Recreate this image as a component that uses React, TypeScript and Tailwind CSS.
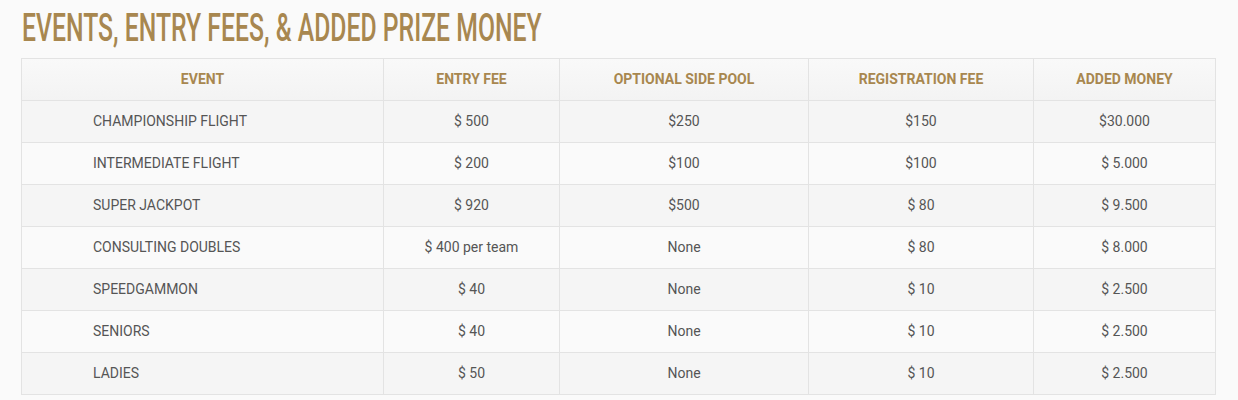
import React from "react";

const rows = [
  ["CHAMPIONSHIP FLIGHT", "$ 500", "$250", "$150", "$30.000"],
  ["INTERMEDIATE FLIGHT", "$ 200", "$100", "$100", "$ 5.000"],
  ["SUPER JACKPOT", "$ 920", "$500", "$ 80", "$ 9.500"],
  ["CONSULTING DOUBLES", "$ 400 per team", "None", "$ 80", "$ 8.000"],
  ["SPEEDGAMMON", "$ 40", "None", "$ 10", "$ 2.500"],
  ["SENIORS", "$ 40", "None", "$ 10", "$ 2.500"],
  ["LADIES", "$ 50", "None", "$ 10", "$ 2.500"],
];

const headers = ["EVENT", "ENTRY FEE", "OPTIONAL SIDE POOL", "REGISTRATION FEE", "ADDED MONEY"];
const widths = ["w-[362px]", "w-[176px]", "w-[249px]", "w-[225px]", "w-[182px]"];

export default function App() {
  return (
    <div className="min-h-[400px] bg-[#fafafa] pl-[21px] pt-[6px] font-['Roboto',sans-serif]">
      <div className="h-[52px] overflow-hidden">
        <h1 className="ml-[1px] inline-block origin-left scale-x-[0.635] whitespace-nowrap text-[39px] font-medium leading-[44px] text-[#a8874f] font-['Roboto',sans-serif]">
          EVENTS, ENTRY FEES, &amp; ADDED PRIZE MONEY
        </h1>
      </div>
      <table className="w-[1195px] table-fixed border-collapse border border-[#e3e3e3]">
        <colgroup>
          {widths.map((w, i) => (
            <col key={i} className={w} />
          ))}
        </colgroup>
        <thead>
          <tr className="h-[42px] bg-gradient-to-b from-[#f9f9f9] to-[#f3f3f3]">
            {headers.map((h) => (
              <th
                key={h}
                className="border border-[#e3e3e3] text-center text-[14px] font-bold text-[#a8874f]"
              >
                {h}
              </th>
            ))}
          </tr>
        </thead>
        <tbody>
          {rows.map((r, i) => (
            <tr key={i} className={`h-[42px] ${i % 2 === 0 ? "bg-[#f5f5f5]" : "bg-[#fafafa]"}`}>
              {r.map((c, j) => (
                <td
                  key={j}
                  className={`border border-[#e3e3e3] text-[14px] text-[#555555] ${
                    j === 0 ? "pl-[71px] text-left" : "text-center"
                  }`}
                >
                  {c}
                </td>
              ))}
            </tr>
          ))}
        </tbody>
      </table>
    </div>
  );
}
